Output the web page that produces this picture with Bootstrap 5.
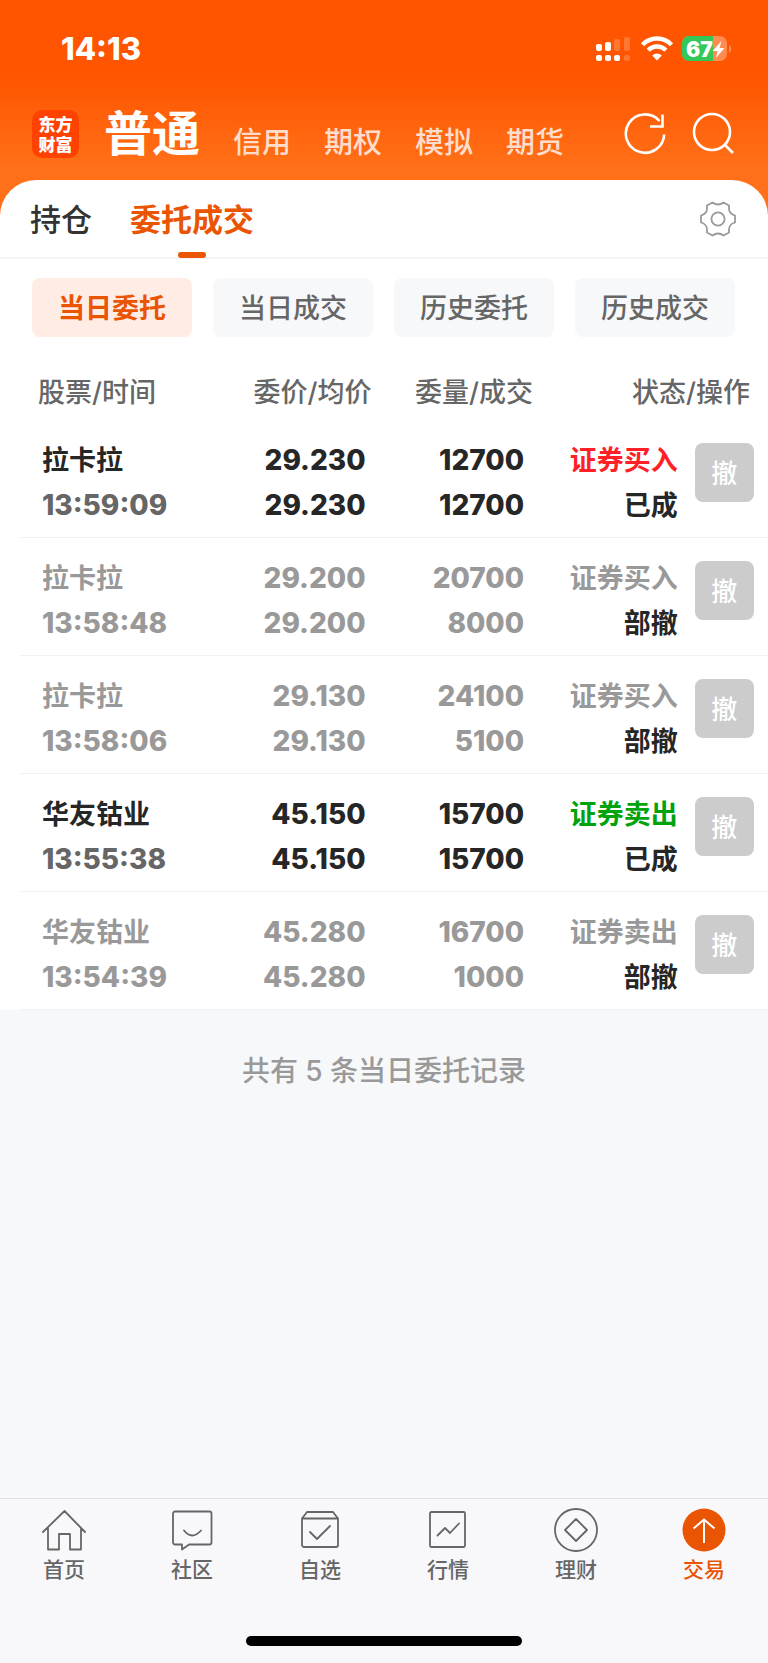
<!DOCTYPE html>
<html lang="zh-CN">
<head>
<meta charset="utf-8">
<meta name="viewport" content="width=device-width, initial-scale=1">
<title>委托成交</title>
<link href="https://cdn.jsdelivr.net/npm/bootstrap@5.3.0/dist/css/bootstrap.min.css" rel="stylesheet">
<style>
  :root { --brand: #ea5504; --ink: #262626; --mid: #666; --dim: #999; --paper: #f7f8fa; }
  body { font-family: Inter, "Noto Sans CJK SC", sans-serif; background: var(--paper); color: var(--ink); }
  a { text-decoration: none; }
  svg { display: block; flex: none; }

  .app-top { background: linear-gradient(#ff5500 76px, #ff7018 168px); }
  .status-bar { height: 98px; padding: 0 36px 0 61px; }
  .clock { font-size: 31px; line-height: 32px; font-weight: 800; }
  .account-bar { height: 82px; padding: 0 32px 10px; }
  .brand-logo { width: 47px; height: 48px; padding: 4px 0; border-radius: 10px; background: #ff4200; font: 900 17px/20px "Noto Sans CJK SC", sans-serif; }
  .account-main { font-size: 48px; line-height: 56px; margin-left: 25px; }
  .account-nav { gap: 33px; margin-left: 33px; padding-top: 17px; }
  .account-nav a { font-size: 29px; line-height: 36px; color: #ffddcc; }
  .icon-btn { border: 0; padding: 0; background: none; color: inherit; }

  .section-tabs { gap: 38px; height: 79px; background: #fff; border-bottom: 2px solid #f5f5f7; border-radius: 36px 36px 0 0; padding: 0 32px 0 30px; font-size: 31px; line-height: 36px; }
  .section-tabs a { color: #333; height: 78px; padding-top: 22px; }
  .section-tabs a.current { color: var(--brand); }
  .section-tabs a.current::after { content: ""; position: absolute; left: 50%; bottom: 0; width: 28px; height: 6px; margin-left: -14px; border-radius: 3px; background: var(--brand); }

  .filters { gap: 21px; padding: 19px 33px 0 32px; }
  .filters button { border: 0; height: 59px; border-radius: 8px; background: #f7f8fa; color: var(--mid); font-size: 27px; line-height: 36px; padding: 2px 0 0; }
  .filters button.current { background: #ffede5; color: var(--brand); font-weight: 700; }

  .orders-wrap { padding-left: 20px; }
  .orders { table-layout: fixed; width: 100%; font-size: 27px; line-height: 45px; font-weight: 700; white-space: nowrap; }
  .orders th { font-weight: 500; color: var(--mid); padding: 33px 0 5px; }
  .orders th:first-child { padding-left: 18px; }
  .orders th:nth-child(3) { padding-right: 3px; }
  .orders th:last-child { padding-right: 18px; }
  .orders td { padding: 18px 0 9px; border-bottom: 1px solid #f3f3f4; vertical-align: top; }
  .orders td:nth-child(1) { padding-left: 22px; }
  .orders td:nth-child(2) { padding-right: 6px; }
  .orders td:nth-child(3) { padding-right: 12px; }
  .orders td:nth-child(4) { padding-right: 8px; }
  .orders td:nth-child(5) { padding: 23px 0 0 9px; }
  .orders td > span { display: block; }
  .num { font-size: 28px; font-weight: 800; }
  .clock-cell { color: var(--mid); }
  .partial, .partial .clock-cell { color: var(--dim); }
  .result { color: var(--ink); }
  .buy { color: #ff1f26; }
  .sell { color: #00a30b; }
  .partial .side { color: var(--dim); }
  .revoke { display: block; width: 59px; height: 59px; border: 0; border-radius: 8px; background: #ccc; color: #fff; font-size: 26px; line-height: 36px; font-weight: 500; padding: 2px 0 0; }

  .summary { font-size: 28px; line-height: 40px; color: var(--dim); padding: 41px 0; font-weight: 500; }

  .tab-bar { border-top: 1px solid #dfdfe1; background: #f8f8fb; }
  .tab-bar a { color: var(--mid); font-size: 21px; line-height: 28px; font-weight: 500; padding-top: 9px; }
  .tab-bar a.current { color: var(--brand); }
  .home-bar { width: 36%; height: 10px; border-radius: 5px; background: #000; margin: 52px auto 17px; }
</style>
<script src="https://cdn.jsdelivr.net/npm/bootstrap@5.3.0/dist/js/bootstrap.bundle.min.js"></script>
</head>
<body class="d-flex flex-column min-vh-100">
<header class="app-top">
  <div class="status-bar d-flex align-items-center justify-content-between text-white">
    <span class="clock">14:13</span>
    <div class="d-flex align-items-center">
      <svg width="36" height="26" viewBox="0 0 36 26" fill="#fff" class="me-2" aria-hidden="true">
        <rect x="0" y="8" width="6" height="7" rx="2"/><rect x="9" y="6" width="6" height="9" rx="2"/>
        <rect x="18" y="3" width="6" height="12" rx="2" opacity=".2"/><rect x="28" y="1" width="6" height="14" rx="2" opacity=".2"/>
        <rect x="0" y="19" width="6" height="6" rx="2"/><rect x="9" y="19" width="6" height="6" rx="2"/><rect x="18" y="19" width="6" height="6" rx="2"/>
        <rect x="28" y="19" width="6" height="6" rx="2" opacity=".2"/>
      </svg>
      <svg width="34" height="26" viewBox="1 0 34 26" class="me-2" fill="none" stroke="#fff" stroke-width="4.400" aria-hidden="true">
        <path d="M3.500 8.800a20 20 0 0 1 29 0M9.200 14.300a12 12 0 0 1 17.600 0"/>
        <path d="M13.200 19.500a7 7 0 0 1 9.600 0L18 24.500z" fill="#fff" stroke="none"/>
      </svg>
      <svg width="50" height="26" viewBox="0 0 50 26" role="img" aria-label="67%">
        <rect x="0" y="0" width="45" height="25" rx="7" fill="#ff8b50"/>
        <path d="M7 0H31V25H7a7 7 0 0 1-7-7V7a7 7 0 0 1 7-7z" fill="#34c759"/>
        <path d="M47 9c3 1 3 7 0 8z" fill="#ff8b50"/>
        <text x="4" y="20.500" font-family="Inter, sans-serif" font-weight="900" font-size="21" fill="#fff">67</text>
        <path d="M39.500 5 30.500 15h5L34 22l8.500-10h-5z" fill="#fff"/>
      </svg>
    </div>
  </div>
  <div class="account-bar d-flex align-items-center text-white">
    <div class="brand-logo text-center">东方<br>财富</div>
    <a href="#" class="account-main fw-bold text-white">普通</a>
    <nav class="account-nav d-flex me-auto fw-medium">
      <a href="#">信用</a><a href="#">期权</a><a href="#">模拟</a><a href="#">期货</a>
    </nav>
    <button class="icon-btn me-4" type="button" aria-label="刷新">
      <svg width="44" height="44" viewBox="0 0 44 44" fill="none" stroke="#fff" stroke-width="2.600"><path d="M40.200 22.500a19.200 19.200 0 1 1-4.700-13.500M38.500 2.500V14.500H26"/></svg>
    </button>
    <button class="icon-btn" type="button" aria-label="搜索">
      <svg width="44" height="44" viewBox="0 0 44 44" fill="none" stroke="#fff" stroke-width="2.600"><circle cx="20" cy="20" r="18"/><path d="M32.500 32.500 41 41"/></svg>
    </button>
  </div>
  <nav class="section-tabs d-flex">
    <a href="#" class="fw-medium">持仓</a>
    <a href="#" class="current fw-bold position-relative">委托成交</a>
    <button class="icon-btn ms-auto" type="button" aria-label="设置">
      <svg width="36" height="36" viewBox="0 0 36 36" fill="none" stroke="#999" stroke-width="1.800" stroke-linejoin="round"><circle cx="18" cy="18" r="6.600"/>
      <path d="M12.500 1.500Q18 5.500 23.500 1.500L29 4.500V8Q29.500 13 35 14.500V21.500Q29.500 23 29 28V31.500L23.500 34.500Q18 30.500 12.500 34.500L7 31.500V28Q6.500 23 1 21.500V14.500Q6.500 13 7 8V4.500Z"/></svg>
    </button>
  </nav>
</header>

<main class="flex-grow-1">
  <div class="bg-white">
    <div class="filters d-flex">
      <button type="button" class="col current">当日委托</button>
      <button type="button" class="col fw-medium">当日成交</button>
      <button type="button" class="col fw-medium">历史委托</button>
      <button type="button" class="col fw-medium">历史成交</button>
    </div>
    <div class="orders-wrap">
      <table class="orders">
        <colgroup><col style="width:28%"><col style="width:19%"><col style="width:22%"><col style="width:20%"><col style="width:11%"></colgroup>
        <thead><tr><th>股票/时间</th><th class="text-end">委价/均价</th><th class="text-end">委量/成交</th><th class="text-end" colspan="2">状态/操作</th></tr></thead>
        <tbody>
          <tr><td><span>拉卡拉</span><span class="num clock-cell">13:59:09</span></td><td class="text-end num"><span>29.230</span><span>29.230</span></td><td class="text-end num"><span>12700</span><span>12700</span></td><td class="text-end"><span class="side buy">证券买入</span><span class="result">已成</span></td><td><button type="button" class="revoke">撤</button></td></tr>
          <tr class="partial"><td><span>拉卡拉</span><span class="num clock-cell">13:58:48</span></td><td class="text-end num"><span>29.200</span><span>29.200</span></td><td class="text-end num"><span>20700</span><span>8000</span></td><td class="text-end"><span class="side">证券买入</span><span class="result">部撤</span></td><td><button type="button" class="revoke">撤</button></td></tr>
          <tr class="partial"><td><span>拉卡拉</span><span class="num clock-cell">13:58:06</span></td><td class="text-end num"><span>29.130</span><span>29.130</span></td><td class="text-end num"><span>24100</span><span>5100</span></td><td class="text-end"><span class="side">证券买入</span><span class="result">部撤</span></td><td><button type="button" class="revoke">撤</button></td></tr>
          <tr><td><span>华友钴业</span><span class="num clock-cell">13:55:38</span></td><td class="text-end num"><span>45.150</span><span>45.150</span></td><td class="text-end num"><span>15700</span><span>15700</span></td><td class="text-end"><span class="side sell">证券卖出</span><span class="result">已成</span></td><td><button type="button" class="revoke">撤</button></td></tr>
          <tr class="partial"><td><span>华友钴业</span><span class="num clock-cell">13:54:39</span></td><td class="text-end num"><span>45.280</span><span>45.280</span></td><td class="text-end num"><span>16700</span><span>1000</span></td><td class="text-end"><span class="side">证券卖出</span><span class="result">部撤</span></td><td><button type="button" class="revoke">撤</button></td></tr>
        </tbody>
      </table>
    </div>
  </div>
  <p class="summary text-center mb-0">共有 5 条当日委托记录</p>
</main>

<footer class="tab-bar">
  <nav class="d-flex text-center">
    <a href="#" class="col d-flex flex-column align-items-center">
      <svg width="44" height="44" viewBox="0 0 44 44" fill="none" stroke="#666" stroke-width="1.800" stroke-linejoin="round" stroke-linecap="round" class="mb-1"><path d="M1 24 22.500 3 43 24M6 20.500V41.500H17V26H28V41.500H39V20.500"/></svg>首页</a>
    <a href="#" class="col d-flex flex-column align-items-center">
      <svg width="44" height="44" viewBox="0 0 44 44" fill="none" stroke="#666" stroke-width="1.800" stroke-linejoin="round" stroke-linecap="round" class="mb-1"><path d="M5 3.500H39.500a2 2 0 0 1 2 2V34.500a2 2 0 0 1-2 2H19L12 41.500V36.500H5a2 2 0 0 1-2-2V5.500a2 2 0 0 1 2-2zM14 22.500q8 10 17 0"/></svg>社区</a>
    <a href="#" class="col d-flex flex-column align-items-center">
      <svg width="44" height="44" viewBox="0 0 44 44" fill="none" stroke="#666" stroke-width="1.800" stroke-linejoin="round" stroke-linecap="round" class="mb-1"><path d="M4 10.500H40V37a2 2 0 0 1-2 2H6a2 2 0 0 1-2-2zL9 4H35L40 10.500M12 24 19 31 32 18"/></svg>自选</a>
    <a href="#" class="col d-flex flex-column align-items-center">
      <svg width="44" height="44" viewBox="0 0 44 44" fill="none" stroke="#666" stroke-width="1.800" stroke-linejoin="round" stroke-linecap="round" class="mb-1"><rect x="4" y="4" width="35" height="35" rx="1.500"/><path d="M11.500 27.500 19 20 24 25 33 15.500"/></svg>行情</a>
    <a href="#" class="col d-flex flex-column align-items-center">
      <svg width="44" height="44" viewBox="0 0 44 44" fill="none" stroke="#666" stroke-width="1.800" stroke-linejoin="round" class="mb-1"><circle cx="22" cy="22" r="21"/><path d="M22 11 33 22 22 33 11 22z"/></svg>理财</a>
    <a href="#" class="col d-flex flex-column align-items-center current">
      <svg width="44" height="44" viewBox="0 0 44 44" fill="none" stroke="#fff" stroke-width="2" class="mb-1"><circle cx="22" cy="22" r="21.500" fill="#ea5504" stroke="none"/><path d="M22 35V12M11.500 20.500 22 11.500 32.500 20.500"/></svg>交易</a>
  </nav>
  <div class="home-bar"></div>
</footer>
</body>
</html>
